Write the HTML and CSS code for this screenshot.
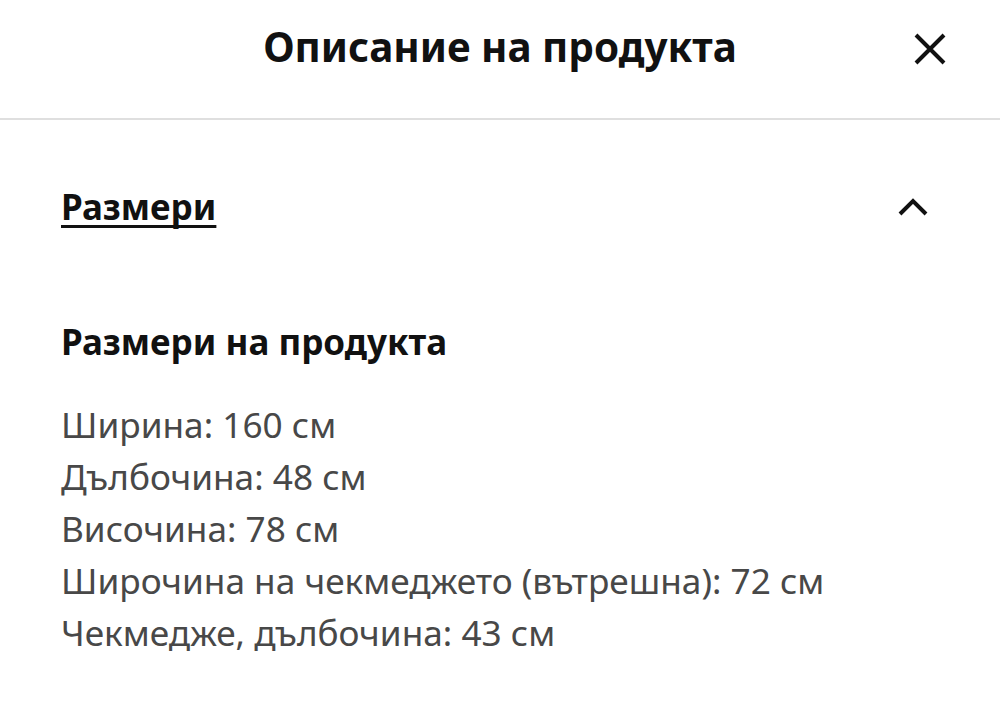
FILE: index.html
```html
<!DOCTYPE html>
<html lang="bg">
<head>
<meta charset="utf-8">
<title>Описание на продукта</title>
<link rel="stylesheet" href="styles.css">
</head>
<body>
<header class="header">
  <h1 class="title">Описание на продукта</h1>
  <button class="close" aria-label="Затвори">
    <svg width="34" height="34" viewBox="0 0 34 34"><path d="M3 3 L31 31 M31 3 L3 31" stroke="#111" stroke-width="4" stroke-linecap="butt" fill="none"/></svg>
  </button>
</header>
<main class="content">
  <div class="accordion">
    <span class="acc-title">Размери</span>
    <svg class="chev" width="30" height="18" viewBox="0 0 30 18"><path d="M2 16 L15 3 L28 16" stroke="#111" stroke-width="4" fill="none"/></svg>
  </div>
  <h2 class="sub">Размери на продукта</h2>
  <ul class="dims">
    <li>Ширина: 160 см</li>
    <li>Дълбочина: 48 см</li>
    <li>Височина: 78 см</li>
    <li>Широчина на чекмеджето (вътрешна): 72 см</li>
    <li>Чекмедже, дълбочина: 43 см</li>
  </ul>
</main>
</body>
</html>
```
FILE: styles.css
```css
* { box-sizing: border-box; }
html, body { margin: 0; padding: 0; background: #fff; }
body { font-family: "Noto Sans", "Open Sans", sans-serif; color: #111; }
.header {
  height: 120px;
  display: flex;
  align-items: center;
  justify-content: center;
  border-bottom: 2px solid #dfdfdf;
  position: relative;
}
.title { margin: 0; font-size: 40.4px; font-weight: 700; line-height: 56px; position: relative; top: -12px; }
.close {
  position: absolute; right: 53px; top: 32px;
  background: none; border: 0; padding: 0; width: 34px; height: 34px; cursor: pointer;
}
.close svg { display: block; }
.content { padding: 0 72px 0 61px; }
.accordion {
  display: flex; justify-content: space-between; align-items: flex-start;
  padding-top: 61px; height: 196px;
}
.acc-title {
  font-size: 35px; font-weight: 700; line-height: 52px;
  text-decoration: underline; text-decoration-skip-ink: none;
  text-underline-offset: 5px; text-decoration-thickness: 3px;
}
.chev { margin-top: 17px; }
.sub { margin: 0; font-size: 35px; font-weight: 700; line-height: 52px; }
.dims { list-style: none; margin: 30px 0 0; padding: 0; color: #484848; font-size: 35.2px; line-height: 52px; }
```
